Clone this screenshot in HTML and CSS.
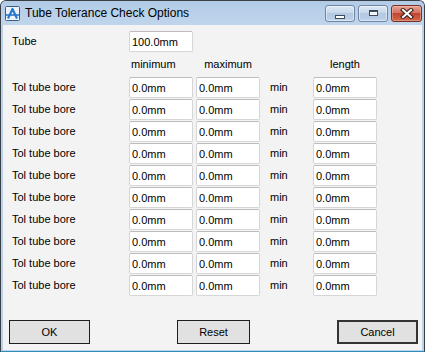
FILE: index.html
```html
<!DOCTYPE html>
<html lang="en">
<head>
    <meta charset="UTF-8">
    <title>Tube Tolerance Check Options</title>
    <link rel="stylesheet" href="styles.css">
</head>
<body>
    <div class="window">
        <div class="titlebar">
            <svg class="app-icon" width="15" height="15" viewBox="0 0 15 15">
                <rect x="0.5" y="0.5" width="14" height="14" rx="1" fill="#eef4fb" stroke="#3f5c82"/>
                <path d="M3 12.5 L7.5 3 L12 12.5" fill="none" stroke="#2b79c9" stroke-width="2.2" stroke-linejoin="round"/>
                <path d="M1 9 H14" stroke="#2b79c9" stroke-width="1.6"/>
            </svg>
            <span class="title">Tube Tolerance Check Options</span>
            <div class="caption-buttons">
                <div class="cap-btn">
                    <span class="min-glyph"></span>
                </div>
                <div class="cap-btn">
                    <span class="max-glyph"></span>
                </div>
                <div class="cap-btn close">
                    <svg width="14" height="11" viewBox="0 0 14 11">
                        <path d="M3 2 L11 9 M11 2 L3 9" stroke="#3a2520" stroke-width="4.2" stroke-linecap="square"/>
                        <path d="M3 2 L11 9 M11 2 L3 9" stroke="#ffffff" stroke-width="2" stroke-linecap="square"/>
                    </svg>
                </div>
            </div>
        </div>

        <div class="client">
            <div class="form-grid">
                <!-- tube length -->
                <span class="label">Tube</span>
                <input class="field" type="text" value="100.0mm">
                <span></span><span></span><span></span>

                <!-- column headers -->
                <span></span>
                <span class="head head-min">minimum</span>
                <span class="head head-center">maximum</span>
                <span></span>
                <span class="head head-center">length</span>

                <span class="label">Tol tube bore</span>
                <input class="field" type="text" value="0.0mm">
                <input class="field" type="text" value="0.0mm">
                <span class="label">min</span>
                <input class="field" type="text" value="0.0mm">

                <span class="label">Tol tube bore</span>
                <input class="field" type="text" value="0.0mm">
                <input class="field" type="text" value="0.0mm">
                <span class="label">min</span>
                <input class="field" type="text" value="0.0mm">

                <span class="label">Tol tube bore</span>
                <input class="field" type="text" value="0.0mm">
                <input class="field" type="text" value="0.0mm">
                <span class="label">min</span>
                <input class="field" type="text" value="0.0mm">

                <span class="label">Tol tube bore</span>
                <input class="field" type="text" value="0.0mm">
                <input class="field" type="text" value="0.0mm">
                <span class="label">min</span>
                <input class="field" type="text" value="0.0mm">

                <span class="label">Tol tube bore</span>
                <input class="field" type="text" value="0.0mm">
                <input class="field" type="text" value="0.0mm">
                <span class="label">min</span>
                <input class="field" type="text" value="0.0mm">

                <span class="label">Tol tube bore</span>
                <input class="field" type="text" value="0.0mm">
                <input class="field" type="text" value="0.0mm">
                <span class="label">min</span>
                <input class="field" type="text" value="0.0mm">

                <span class="label">Tol tube bore</span>
                <input class="field" type="text" value="0.0mm">
                <input class="field" type="text" value="0.0mm">
                <span class="label">min</span>
                <input class="field" type="text" value="0.0mm">

                <span class="label">Tol tube bore</span>
                <input class="field" type="text" value="0.0mm">
                <input class="field" type="text" value="0.0mm">
                <span class="label">min</span>
                <input class="field" type="text" value="0.0mm">

                <span class="label">Tol tube bore</span>
                <input class="field" type="text" value="0.0mm">
                <input class="field" type="text" value="0.0mm">
                <span class="label">min</span>
                <input class="field" type="text" value="0.0mm">

                <span class="label">Tol tube bore</span>
                <input class="field" type="text" value="0.0mm">
                <input class="field" type="text" value="0.0mm">
                <span class="label">min</span>
                <input class="field" type="text" value="0.0mm">
            </div>

            <div class="button-row">
                <button class="btn btn-ok">OK</button>
                <button class="btn btn-reset">Reset</button>
                <button class="btn btn-cancel">Cancel</button>
            </div>
        </div>
    </div>
</body>
</html>
```

FILE: styles.css
```css
body {
    margin: 0;
    background: #ffffff;
    font-family: "Liberation Sans", Arial, sans-serif;
}

/* Window frame */
.window {
    width: 423px;
    height: 350px;
    display: flex;
    flex-direction: column;
    border: 1px solid #3a3f46;
    border-bottom-color: #2d8fb8;
    border-radius: 6px 6px 0 0;
    background: #b9d1ea;
}

/* Title bar */
.titlebar {
    height: 24px;
    display: flex;
    align-items: flex-start;
    background: linear-gradient(to bottom, #b2cbe6, #bfd5ec);
    border-radius: 5px 5px 0 0;
}

.app-icon {
    margin: 5px 0 0 4px;
}

.title {
    margin: 5px 0 0 5px;
    font-size: 12px;
    line-height: 15px;
    color: #000000;
}

.caption-buttons {
    margin: 4px 2px 0 auto;
    display: flex;
    gap: 3px;
}

.cap-btn {
    width: 28px;
    height: 15px;
    border: 1px solid #6f86a6;
    border-radius: 3px;
    background: linear-gradient(to bottom, #dce7f4 0%, #c7d8eb 45%, #b2c8e1 50%, #bed3ea 100%);
    box-shadow: inset 0 0 0 1px rgba(255, 255, 255, 0.45);
    display: flex;
    justify-content: center;
    align-items: center;
}

.cap-btn.close {
    width: 29px;
    border-color: #7a2f24;
    background: linear-gradient(to bottom, #e4a394 0%, #d6715f 45%, #c24530 50%, #d4684c 100%);
    box-shadow: inset 0 0 0 1px rgba(255, 220, 210, 0.35);
}

.min-glyph {
    width: 8px;
    height: 2px;
    margin-top: 6px;
    background: #ffffff;
    border: 1px solid #3c4a5c;
}

.max-glyph {
    width: 9px;
    height: 6px;
    box-sizing: border-box;
    margin-top: -2px;
    border: 1px solid #3c4a5c;
    border-top-width: 2px;
    background: #e7eef7;
    box-shadow: inset 0 0 0 1px #ffffff;
}

/* Client area */
.client {
    flex: 1;
    margin: 0 2px 1px 2px;
    background: #f3f3f3;
    padding: 6px 4px 0 6px;
    display: flex;
    flex-direction: column;
}

.form-grid {
    display: grid;
    grid-template-columns: 120px 67px 74px 43px 64px;
    grid-template-rows: 21px 23px repeat(10, 21px);
    row-gap: 1px;
    font-size: 11px;
    color: #000000;
}

.label {
    line-height: 21px;
    padding-left: 3px;
}

.form-grid .label:nth-child(5n+4) {
    padding-left: 0;
}

.head {
    line-height: 23px;
}

.head-min {
    padding-left: 2px;
}

.head-center {
    width: 64px;
    text-align: center;
}

.field {
    width: 64px;
    height: 21px;
    box-sizing: border-box;
    margin: 0;
    padding: 0 2px;
    border: 1px solid #d6d6d6;
    border-top-color: #bcbcbc;
    border-radius: 2px;
    background: #ffffff;
    font-family: "Liberation Sans", Arial, sans-serif;
    font-size: 11px;
    color: #000000;
    outline: none;
}

/* Dialog buttons */
.button-row {
    margin-top: 24px;
    display: flex;
    justify-content: space-between;
}

.btn {
    height: 24px;
    margin: 0;
    padding: 0;
    border: 1px solid #1e1e1e;
    background: #e1e1e1;
    font-family: "Liberation Sans", Arial, sans-serif;
    font-size: 11px;
    color: #000000;
}

.btn-ok {
    width: 81px;
}

.btn-reset {
    width: 73px;
}

.btn-cancel {
    width: 81px;
    border: 2px solid #333333;
}
```
